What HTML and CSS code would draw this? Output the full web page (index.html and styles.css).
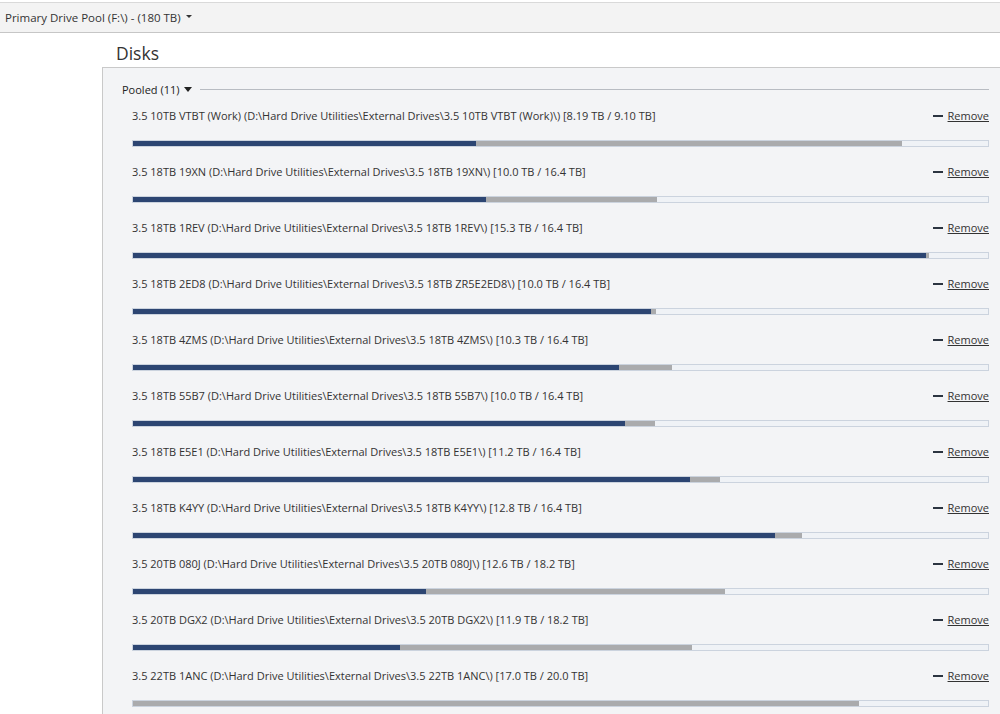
FILE: index.html
```html
<!DOCTYPE html>
<html lang="en">
<head>
  <meta charset="UTF-8">
  <title>Disks</title>
  <link rel="stylesheet" href="styles.css">
</head>
<body>

  <!-- Pool selector bar -->
  <div class="pool-bar">
    <span class="pool-name">Primary Drive Pool (F:\) - (180 TB)</span>
    <span class="caret-sm"></span>
  </div>

  <h2 class="title">Disks</h2>

  <div class="panel">
    <div class="group-head">
      <span>Pooled (11)</span>
      <span class="caret"></span>
      <span class="rule"></span>
    </div>

    <div class="disk">
      <div class="disk-top">
        <span class="label">3.5 10TB VTBT (Work) (D:\Hard Drive Utilities\External Drives\3.5 10TB VTBT (Work)\) [8.19 TB / 9.10 TB]</span>
        <a class="remove"><span class="dash"></span><span class="lnk">Remove</span></a>
      </div>
      <div class="bar"><span class="used" style="width:40.1%"></span><span class="other" style="width:49.8%"></span></div>
    </div>

    <div class="disk">
      <div class="disk-top">
        <span class="label">3.5 18TB 19XN (D:\Hard Drive Utilities\External Drives\3.5 18TB 19XN\) [10.0 TB / 16.4 TB]</span>
        <a class="remove"><span class="dash"></span><span class="lnk">Remove</span></a>
      </div>
      <div class="bar"><span class="used" style="width:41.3%"></span><span class="other" style="width:20%"></span></div>
    </div>

    <div class="disk">
      <div class="disk-top">
        <span class="label">3.5 18TB 1REV (D:\Hard Drive Utilities\External Drives\3.5 18TB 1REV\) [15.3 TB / 16.4 TB]</span>
        <a class="remove"><span class="dash"></span><span class="lnk">Remove</span></a>
      </div>
      <div class="bar"><span class="used" style="width:92.8%"></span><span class="other" style="width:0.3%"></span></div>
    </div>

    <div class="disk">
      <div class="disk-top">
        <span class="label">3.5 18TB 2ED8 (D:\Hard Drive Utilities\External Drives\3.5 18TB ZR5E2ED8\) [10.0 TB / 16.4 TB]</span>
        <a class="remove"><span class="dash"></span><span class="lnk">Remove</span></a>
      </div>
      <div class="bar"><span class="used" style="width:60.6%"></span><span class="other" style="width:0.6%"></span></div>
    </div>

    <div class="disk">
      <div class="disk-top">
        <span class="label">3.5 18TB 4ZMS (D:\Hard Drive Utilities\External Drives\3.5 18TB 4ZMS\) [10.3 TB / 16.4 TB]</span>
        <a class="remove"><span class="dash"></span><span class="lnk">Remove</span></a>
      </div>
      <div class="bar"><span class="used" style="width:56.9%"></span><span class="other" style="width:6.2%"></span></div>
    </div>

    <div class="disk">
      <div class="disk-top">
        <span class="label">3.5 18TB 55B7 (D:\Hard Drive Utilities\External Drives\3.5 18TB 55B7\) [10.0 TB / 16.4 TB]</span>
        <a class="remove"><span class="dash"></span><span class="lnk">Remove</span></a>
      </div>
      <div class="bar"><span class="used" style="width:57.6%"></span><span class="other" style="width:3.5%"></span></div>
    </div>

    <div class="disk">
      <div class="disk-top">
        <span class="label">3.5 18TB E5E1 (D:\Hard Drive Utilities\External Drives\3.5 18TB E5E1\) [11.2 TB / 16.4 TB]</span>
        <a class="remove"><span class="dash"></span><span class="lnk">Remove</span></a>
      </div>
      <div class="bar"><span class="used" style="width:65.1%"></span><span class="other" style="width:3.5%"></span></div>
    </div>

    <div class="disk">
      <div class="disk-top">
        <span class="label">3.5 18TB K4YY (D:\Hard Drive Utilities\External Drives\3.5 18TB K4YY\) [12.8 TB / 16.4 TB]</span>
        <a class="remove"><span class="dash"></span><span class="lnk">Remove</span></a>
      </div>
      <div class="bar"><span class="used" style="width:75.1%"></span><span class="other" style="width:3.2%"></span></div>
    </div>

    <div class="disk">
      <div class="disk-top">
        <span class="label">3.5 20TB 080J (D:\Hard Drive Utilities\External Drives\3.5 20TB 080J\) [12.6 TB / 18.2 TB]</span>
        <a class="remove"><span class="dash"></span><span class="lnk">Remove</span></a>
      </div>
      <div class="bar"><span class="used" style="width:34.3%"></span><span class="other" style="width:34.9%"></span></div>
    </div>

    <div class="disk">
      <div class="disk-top">
        <span class="label">3.5 20TB DGX2 (D:\Hard Drive Utilities\External Drives\3.5 20TB DGX2\) [11.9 TB / 18.2 TB]</span>
        <a class="remove"><span class="dash"></span><span class="lnk">Remove</span></a>
      </div>
      <div class="bar"><span class="used" style="width:31.2%"></span><span class="other" style="width:34.2%"></span></div>
    </div>

    <div class="disk">
      <div class="disk-top">
        <span class="label">3.5 22TB 1ANC (D:\Hard Drive Utilities\External Drives\3.5 22TB 1ANC\) [17.0 TB / 20.0 TB]</span>
        <a class="remove"><span class="dash"></span><span class="lnk">Remove</span></a>
      </div>
      <div class="bar"><span class="used" style="width:0%"></span><span class="other" style="width:84.9%"></span></div>
    </div>
  </div>

</body>
</html>
```

FILE: styles.css
```css
/* reset & basic */
* { box-sizing: border-box; margin: 0; padding: 0; }
html, body { height: 100%; }
body {
  font-family: "Open Sans", "Noto Sans", sans-serif;
  font-size: 11px;
  color: #333;
  background: #fff;
  overflow: hidden;
  display: flex;
  flex-direction: column;
}

/* pool selector */
.pool-bar {
  margin-top: 2px;
  height: 31px;
  flex: none;
  background: #f3f3f3;
  border-top: 1px solid #d9d9d9;
  border-bottom: 1px solid #c6c6c6;
  display: flex;
  align-items: center;
  padding-left: 5px;
  gap: 5px;
  font-size: 11.5px;
  color: #333;
}
.caret-sm {
  width: 0;
  height: 0;
  border-left: 3px solid transparent;
  border-right: 3px solid transparent;
  border-top: 3px solid #333;
  margin-top: -2px;
}

.title {
  font-weight: normal;
  font-size: 17.5px;
  color: #333;
  margin: 7px 0 0 116px;
  height: 27px;
  line-height: 27px;
  flex: none;
}

/* disks panel */
.panel {
  flex: 1;
  margin-left: 102px;
  background: #f3f4f6;
  border-top: 1px solid #c9c9c9;
  border-left: 1px solid #c9c9c9;
  padding: 12px 11px 0 19px;
  overflow: hidden;
}
.group-head {
  display: flex;
  align-items: center;
  height: 18px;
  gap: 5px;
  font-size: 11px;
  color: #222;
  margin-bottom: 7px;
}
.caret {
  width: 0;
  height: 0;
  border-left: 4.5px solid transparent;
  border-right: 4.5px solid transparent;
  border-top: 5px solid #222;
  margin-right: 3px;
}
.rule {
  flex: 1;
  height: 1px;
  background: #b8bcc2;
}

.disk {
  margin-left: 10px;
  height: 56px;
}
.disk-top {
  display: flex;
  justify-content: space-between;
  align-items: center;
  height: 20px;
}
.label {
  font-size: 11px;
  color: #333;
  white-space: nowrap;
}
.remove {
  display: flex;
  align-items: center;
  gap: 5px;
  font-size: 11px;
  color: #333;
}
.dash {
  width: 10px;
  height: 2px;
  margin-top: 2px;
  background: #2b3440;
}
.lnk { text-decoration: underline; }

.bar {
  margin-top: 15px;
  height: 7px;
  border: 1px solid #cbd3de;
  background: #eff2f6;
  display: flex;
}
.used { background: #2c4572; height: 100%; }
.other { background: #aaabad; height: 100%; }
```
